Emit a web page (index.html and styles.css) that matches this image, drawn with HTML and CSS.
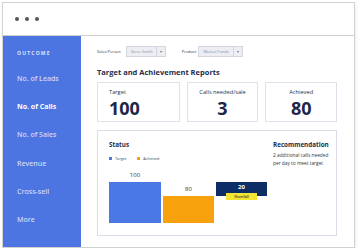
FILE: index.html
```html
<!DOCTYPE html>
<html>
<head>
  <title>Target and Achievement Reports</title>
  <meta charset="UTF-8">
  <meta name="viewport" content="width=device-width, initial-scale=1.0">
  <link rel="stylesheet" href="styles.css">
</head>
<body>
  <div class="window">
    <div class="titlebar">
      <span class="dot"></span>
      <span class="dot"></span>
      <span class="dot"></span>
    </div>
    <div class="app">
      <div class="sidebar">
        <div class="side-title">OUTCOME</div>
        <div class="side-item">No. of Leads</div>
        <div class="side-item active">No. of Calls</div>
        <div class="side-item">No. of Sales</div>
        <div class="side-item">Revenue</div>
        <div class="side-item">Cross-sell</div>
        <div class="side-item">More</div>
      </div>
      <div class="main">
        <div class="filters">
          <span class="filter-label">Sales Person</span>
          <div class="select sel-person"><span class="select-text">Steve Smith</span><span class="select-arrow">&#9662;</span></div>
          <span class="filter-label product">Product</span>
          <div class="select sel-product"><span class="select-text">Mutual Funds</span><span class="select-arrow">&#9662;</span></div>
        </div>
        <h1>Target and Achievement Reports</h1>
        <div class="cards">
          <div class="card left">
            <div class="card-label">Target</div>
            <div class="card-value">100</div>
          </div>
          <div class="card">
            <div class="card-label">Calls needed/sale</div>
            <div class="card-value">3</div>
          </div>
          <div class="card">
            <div class="card-label">Achieved</div>
            <div class="card-value">80</div>
          </div>
        </div>
        <div class="status">
          <div class="status-chart">
            <h2>Status</h2>
            <div class="legend">
              <span class="swatch blue"></span><span class="legend-text">Target</span>
              <span class="swatch orange"></span><span class="legend-text">Achieved</span>
            </div>
            <div class="chart">
              <div class="col">
                <div class="bar-label">100</div>
                <div class="bar blue tall"></div>
              </div>
              <div class="col">
                <div class="bar-label">80</div>
                <div class="bar orange mid"></div>
              </div>
              <div class="col gap">
                <div class="bar navy">20<span class="tag">Shortfall</span></div>
              </div>
            </div>
          </div>
          <div class="recommend">
            <h2>Recommendation</h2>
            <p>2 additional calls needed per day to meet target</p>
          </div>
        </div>
      </div>
    </div>
  </div>
</body>
</html>
```

FILE: styles.css
```css
body {
  margin: 0;
  background-color: #fff;
  font-family: "Open Sans", "Noto Sans", sans-serif;
}
.window {
  margin: 2px 0 0 2px;
  width: 351px;
  height: 244px;
  border: 1px solid #d2d2d2;
  box-shadow: 1px 2px 3px rgba(0, 0, 0, 0.08);
  display: flex;
  flex-direction: column;
}
.titlebar {
  height: 32px;
  border-bottom: 1px solid #cfcfcf;
  display: flex;
  align-items: center;
  gap: 6px;
  padding-left: 12px;
}
.dot {
  width: 4px;
  height: 4px;
  border-radius: 50%;
  background-color: #555;
}
.app {
  flex: 1;
  display: flex;
}
.sidebar {
  width: 78px;
  background-color: #4c75e1;
  padding: 13px 0 0 14px;
  box-sizing: border-box;
}
.side-title {
  font-size: 5px;
  font-weight: 700;
  letter-spacing: 1.2px;
  color: #dfe7fb;
  line-height: 8px;
  margin-bottom: 17px;
}
.side-item {
  font-size: 7px;
  font-weight: 600;
  color: rgba(255, 255, 255, 0.72);
  line-height: 10px;
  margin-bottom: 18.2px;
}
.side-item.active {
  color: #fff;
  font-weight: 700;
}
.main {
  flex: 1;
  padding: 10px 17px 0 16px;
}
.filters {
  display: flex;
  align-items: center;
  height: 11px;
}
.filter-label {
  font-size: 4px;
  color: #333;
  margin-right: 5px;
  white-space: nowrap;
}
.filter-label.product {
  margin-left: 16px;
  margin-right: 2px;
}
.select {
  height: 11px;
  box-sizing: border-box;
  border: 1px solid #d3d6de;
  background-color: #eceef3;
  display: flex;
  align-items: center;
}
.sel-person {
  width: 40px;
}
.sel-product {
  width: 45px;
}
.select-text {
  flex: 1;
  font-size: 4px;
  color: #8b909c;
  padding-left: 4px;
  white-space: nowrap;
}
.select-arrow {
  width: 8px;
  height: 100%;
  border-left: 1px solid #d3d6de;
  font-size: 4px;
  color: #777;
  display: flex;
  align-items: center;
  justify-content: center;
}
h1 {
  margin: 10px 0 5px;
  font-size: 7.5px;
  line-height: 10px;
  font-weight: 700;
  color: #252d4a;
}
.cards {
  display: flex;
  gap: 7px;
  margin-bottom: 8px;
}
.card {
  flex: 1;
  height: 40px;
  box-sizing: border-box;
  border: 1px solid #dde1ea;
  padding-top: 5px;
  text-align: center;
}
.card.left {
  text-align: left;
  padding-left: 11px;
}
.card-label {
  font-size: 5.7px;
  line-height: 8px;
  color: #2a3148;
  margin-bottom: 2px;
}
.card-value {
  font-size: 18px;
  line-height: 20px;
  font-weight: 700;
  color: #1e2748;
}
.status {
  height: 106px;
  box-sizing: border-box;
  border: 1px solid #d9dde7;
  padding: 9px 0 12px 11px;
  display: flex;
}
.status-chart {
  width: 164px;
  display: flex;
  flex-direction: column;
}
h2 {
  margin: 0;
  font-size: 6.3px;
  line-height: 9px;
  font-weight: 700;
  color: #252d4a;
}
.legend {
  display: flex;
  align-items: center;
  margin-top: 7px;
  height: 5px;
}
.swatch {
  width: 3px;
  height: 3px;
  margin-right: 3px;
}
.legend-text {
  font-size: 3.8px;
  color: #444;
  margin-right: 11px;
}
.chart {
  flex: 1;
  display: flex;
  align-items: flex-end;
  gap: 2px;
}
.col {
  width: 51px;
  text-align: center;
}
.col:first-child {
  width: 52px;
}
.col.gap {
  margin-bottom: 27px;
}
.bar-label {
  font-size: 6px;
  line-height: 8px;
  color: #333;
  margin-bottom: 3.5px;
}
.bar {
  width: 100%;
}
.blue {
  background-color: #4a79e6;
}
.orange {
  background-color: #f7a10d;
}
.tall {
  height: 41px;
}
.mid {
  height: 27px;
}
.navy {
  position: relative;
  height: 14px;
  box-sizing: border-box;
  background-color: #0c2d66;
  color: #fff;
  font-size: 6px;
  font-weight: 700;
  line-height: 8px;
  padding-top: 1px;
}
.tag {
  position: absolute;
  left: 10px;
  top: 11px;
  width: 31px;
  height: 7px;
  background-color: #f2e633;
  color: #333;
  font-size: 3.5px;
  font-weight: 600;
  line-height: 7px;
}
.recommend p {
  margin: 2px 0 0;
  font-size: 4.8px;
  line-height: 8px;
  color: #333;
  width: 62px;
}
```
